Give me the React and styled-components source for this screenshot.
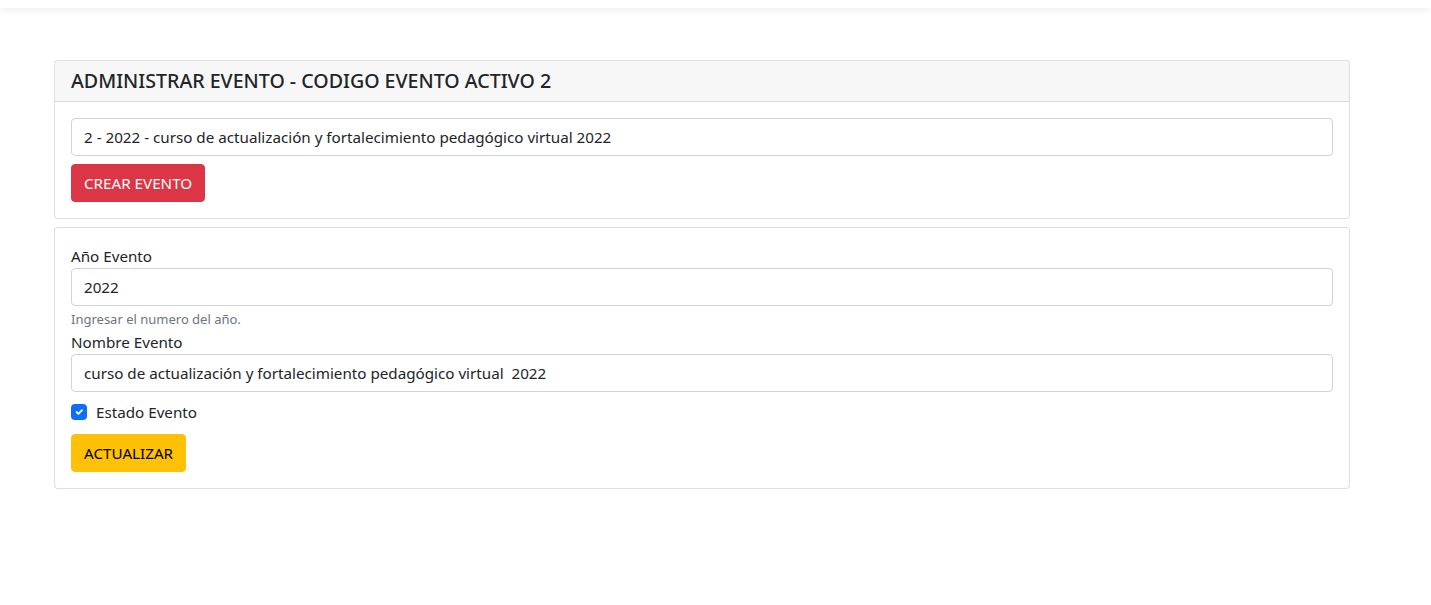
import React from "react";
import styled, { createGlobalStyle } from "styled-components";

const Global = createGlobalStyle`
  * { box-sizing: border-box; }
  body {
    margin: 0;
    font-family: "Segoe UI", "Noto Sans", "Liberation Sans", sans-serif;
    font-size: 15.2px;
    line-height: 24px;
    color: #212529;
    background: #fff;
  }
`;

const TopBar = styled.div`
  height: 8px;
  background: #fff;
  box-shadow: 0 2px 8px rgba(0, 0, 0, 0.08);
  position: relative;
  z-index: 1;
`;

const Main = styled.main`
  padding: 52px 0 0 54px;
  width: 1350px;
  display: flex;
  flex-direction: column;
  gap: 8px;
`;

const Card = styled.section`
  border: 1px solid rgba(0, 0, 0, 0.125);
  border-radius: 4px;
  background: #fff;
`;

const CardHeader = styled.header`
  padding: 8px 16px;
  background: rgba(0, 0, 0, 0.03);
  border-bottom: 1px solid rgba(0, 0, 0, 0.125);
  border-radius: 3px 3px 0 0;
`;

const Title = styled.h5`
  margin: 0;
  font-size: 19.6px;
  font-weight: 500;
  line-height: 24px;
`;

const CardBody = styled.div`
  padding: 16px;
  display: flex;
  flex-direction: column;
  align-items: flex-start;
`;

const Input = styled.input`
  width: 100%;
  height: 38px;
  padding: 6px 12px;
  font: inherit;
  color: #212529;
  border: 1px solid #ced4da;
  border-radius: 4px;
  background: #fff;
  margin-bottom: ${(p) => p.$mb || 0}px;
`;

const Label = styled.label`
  display: block;
  line-height: 24px;
`;

const Help = styled.div`
  margin-top: 3px;
  font-size: 13px;
  color: #6c757d;
  line-height: 21px;
`;

const Button = styled.button`
  font: inherit;
  height: 38px;
  padding: 6px 12px;
  border: 1px solid ${(p) => p.$bg};
  background: ${(p) => p.$bg};
  color: ${(p) => p.$fg};
  border-radius: 4px;
  line-height: 24px;
  margin-top: ${(p) => p.$mt || 0}px;
  cursor: pointer;
`;

const CheckRow = styled.div`
  display: flex;
  align-items: center;
  gap: 9px;
  margin-top: 8px;
  height: 24px;
`;

const CheckBox = styled.span`
  width: 16px;
  height: 16px;
  border-radius: 4px;
  background: #0d6efd;
  display: inline-flex;
  align-items: center;
  justify-content: center;
`;

export default function App() {
  return (
    <>
      <Global />
      <TopBar />
      <Main>
        <Card>
          <CardHeader>
            <Title>ADMINISTRAR EVENTO - CODIGO EVENTO ACTIVO 2</Title>
          </CardHeader>
          <CardBody>
            <Input
              $mb={8}
              readOnly
              value="2 - 2022 - curso de actualización y fortalecimiento pedagógico virtual 2022"
            />
            <Button $bg="#dc3545" $fg="#fff">CREAR EVENTO</Button>
          </CardBody>
        </Card>
        <Card>
          <CardBody>
            <Label>Año Evento</Label>
            <Input readOnly value="2022" />
            <Help>Ingresar el numero del año.</Help>
            <Label>Nombre Evento</Label>
            <Input readOnly value="curso de actualización y fortalecimiento pedagógico virtual  2022" />
            <CheckRow>
              <CheckBox>
                <svg width="12" height="12" viewBox="0 0 20 20">
                  <path d="M6 10l3 3 6-6" fill="none" stroke="#fff" strokeWidth="3" strokeLinecap="round" strokeLinejoin="round" />
                </svg>
              </CheckBox>
              <Label>Estado Evento</Label>
            </CheckRow>
            <Button $bg="#ffc107" $fg="#000" $mt={10}>ACTUALIZAR</Button>
          </CardBody>
        </Card>
      </Main>
    </>
  );
}
